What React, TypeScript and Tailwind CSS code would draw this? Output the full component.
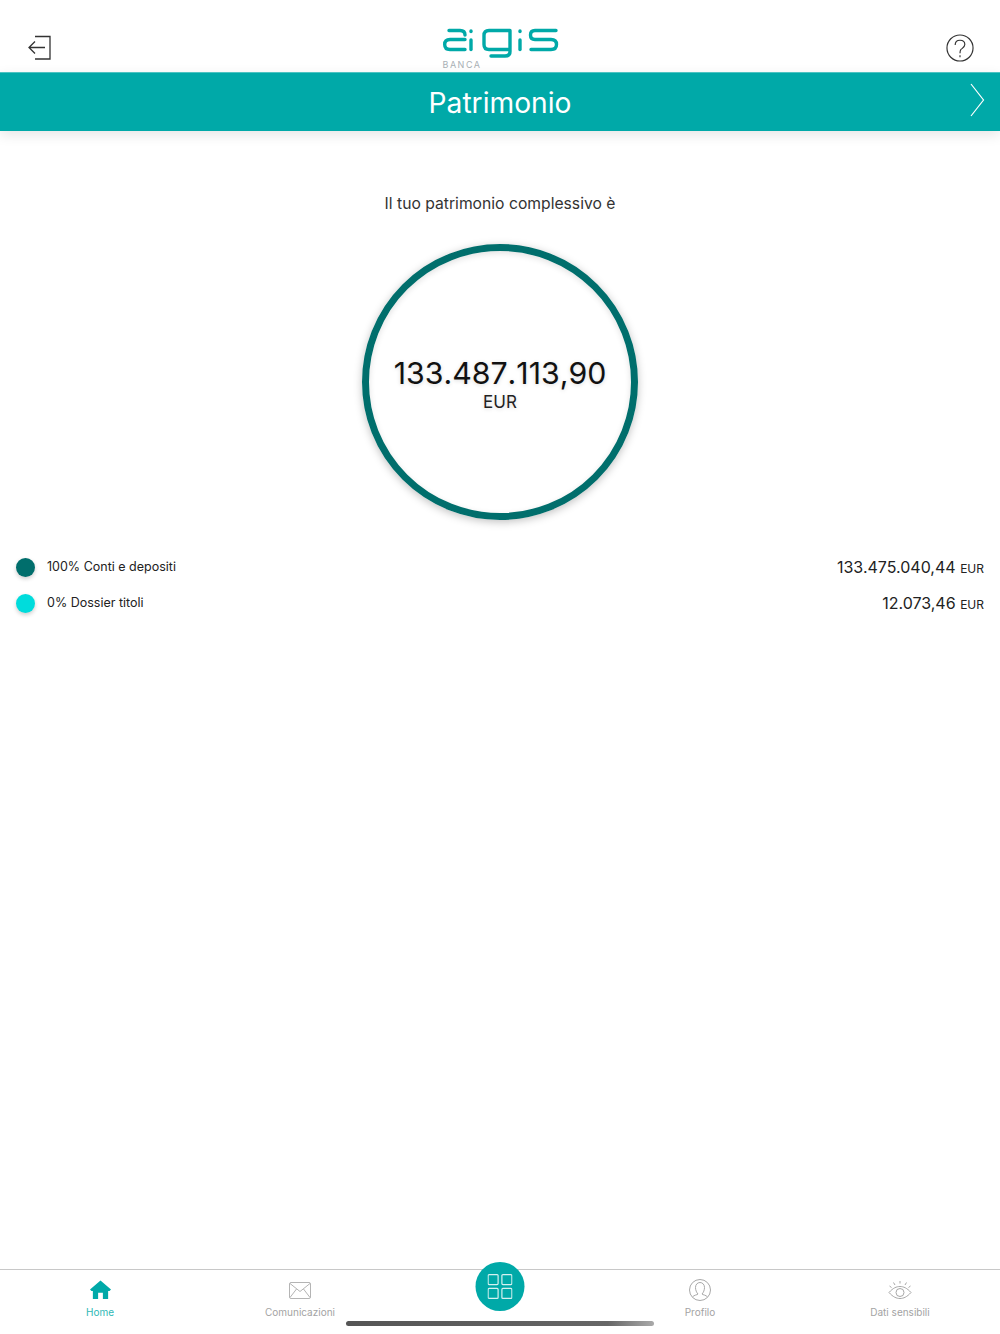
const navItems = [
  { label: "Home", active: true },
  { label: "Comunicazioni", active: false },
  { label: "", active: false },
  { label: "Profilo", active: false },
  { label: "Dati sensibili", active: false },
];

function Logo() {
  return (
    <svg width="116" height="30" viewBox="0 0 116 30" fill="none" stroke="#00a9a8" strokeWidth="3.400" strokeLinecap="round" strokeLinejoin="round">
      <path d="M6 2.500H17C20.500 2.500 22 4 22 7" />
      <path d="M22 11.500H7C3.500 11.500 1.700 13 1.700 16.500C1.700 20 3.500 21.500 7 21.500H22" />
      <path d="M28 12V21.500" />
      <path d="M28 3V3.500" />
      <path d="M67 2.500H46C42.500 2.500 41 4 41 7.500V16.500C41 20 42.500 21.500 46 21.500H67M67 2.500V23.500C67 26.500 65.500 28 62 28H48" />
      <path d="M77 12V21.500" />
      <path d="M77 3V3.500" />
      <path d="M113 2.500H92C89 2.500 87.500 4 87.500 7C87.500 10 89 11.500 92 11.500H108C112 11.500 113.500 13 113.500 16.500C113.500 20 112 21.500 108 21.500H88" />
    </svg>
  );
}

function NavIcon({ index }: { index: number }) {
  if (index === 0) {
    return (
      <svg width="21" height="20" viewBox="0 0 22 20" fill="#00a9a8">
        <path d="M11 0L22 9.500L20.500 11H19V19.500H13.500V13H8.500V19.500H3V11H1.500L0 9.500Z" />
      </svg>
    );
  }
  if (index === 1) {
    return (
      <svg width="22" height="17" viewBox="0 0 22 17" fill="none" stroke="#b4b4b4" strokeWidth="1">
        <rect x="0.500" y="0.500" width="21" height="16" rx="1.500" />
        <path d="M1 1.500L11 9.500L21 1.500M1 15.500L7.500 7M21 15.500L14.500 7" />
      </svg>
    );
  }
  if (index === 3) {
    return (
      <svg width="22" height="22" viewBox="0 0 22 22" fill="none" stroke="#a8a8a8" strokeWidth="1">
        <circle cx="11" cy="11" r="10.500" />
        <path d="M3.500 18C5 16 8 16 9 15C7.500 13.500 6.500 11 6.500 8.500C6.500 5.500 8.500 3.500 11 3.500C13.500 3.500 15.500 5.500 15.500 8.500C15.500 11 14.500 13.500 13 15C14 16 17 16 18.500 18" />
      </svg>
    );
  }
  return (
    <svg width="24" height="20" viewBox="0 0 24 20" fill="none" stroke="#a8a8a8" strokeWidth="1">
      <path d="M1 12.500C5 8 8.500 6.500 12 6.500C15.500 6.500 19 8 23 12.500C19 17 15.500 18.500 12 18.500C8.500 18.500 5 17 1 12.500Z" />
      <circle cx="12" cy="12.500" r="4" />
      <path d="M12 1V3.500M5.500 2.500L7 5M18.500 2.500L17 5M1.500 6L3.500 7.500M22.500 6L20.500 7.500" />
    </svg>
  );
}

export default function App() {
  return (
    <div className="relative flex h-[1334px] w-[1000px] flex-col overflow-hidden bg-white font-['Inter',sans-serif] text-[#1c1c1e]">
      <header className="flex h-[72px] shrink-0 items-start justify-between">
        <svg className="ml-[27px] mt-[35px]" width="24" height="26" viewBox="0 0 24 26" fill="none" stroke="#333" strokeWidth="1.300">
          <path d="M8 1.500H23V24H8" />
          <path d="M18 12.500H2M8 6.500L2 12.500L8 18.500" />
        </svg>
        <div className="ml-[4px] flex flex-col items-start pt-[28px]">
          <Logo />
          <span className="mt-[0.500px] text-[9px] leading-[11px] tracking-[1.500px] text-[#a9b0b5]">BANCA</span>
        </div>
        <svg className="mr-[26px] mt-[34px]" width="28" height="28" viewBox="0 0 29 29" fill="none" stroke="#333" strokeWidth="1.200">
          <circle cx="14.500" cy="14.500" r="13.500" />
          <path d="M9.500 11.500C9.500 8.500 11.500 6.500 14.500 6.500C17.500 6.500 19.500 8.500 19.500 11C19.500 13.500 17 14.500 15.500 16C14.800 16.800 14.500 17.500 14.500 20" />
          <path d="M14.500 22V24" />
        </svg>
      </header>

      <div className="relative flex h-[59px] shrink-0 items-center justify-center border-t border-[#4dc3c2] bg-[#00a9a8] pt-[2px] shadow-[0_4px_12px_rgba(0,0,0,0.1)]">
        <h1 className="text-[28.200px] font-normal leading-none text-white">Patrimonio</h1>
        <svg className="absolute right-[15px] top-[10px]" width="15" height="34" viewBox="0 0 15 34" fill="none" stroke="#fff" strokeWidth="1.200">
          <path d="M1 1L13.500 17L1 33" />
        </svg>
      </div>

      <main className="flex flex-1 flex-col">
        <p className="mt-[63px] text-center text-[15.700px] leading-5 text-[#333]">Il tuo patrimonio complessivo è</p>
        <div className="mx-auto mt-[30px] flex h-[276px] w-[276px] flex-col items-center justify-center rounded-full border-[7px] border-[#006e6c] shadow-[0_2px_8px_rgba(0,0,0,0.25),inset_0_2px_6px_rgba(0,0,0,0.12)]">
          <span className="mt-[1px] text-[30.300px] leading-[38px] text-[#111] [font-kerning:none] [text-shadow:0_1px_4px_rgba(0,0,0,0.15)]">133.487.113,90</span>
          <span className="text-[17px] leading-5 text-[#222] [text-shadow:0_1px_4px_rgba(0,0,0,0.15)]">EUR</span>
        </div>
        <div className="mt-[37px] flex flex-col gap-4 pl-4 pr-4">
          <div className="flex h-5 items-center justify-between">
            <div className="flex items-center gap-[12px]">
              <span className="h-[19px] w-[19px] rounded-full bg-[#006e6c] shadow-[0_2px_4px_rgba(0,0,0,0.2)]" />
              <span className="text-[12.500px] text-[#222]">100% Conti e depositi</span>
            </div>
            <span className="text-[16px] text-[#222]">133.475.040,44 <span className="text-[12px]">EUR</span></span>
          </div>
          <div className="flex h-5 items-center justify-between">
            <div className="flex items-center gap-[12px]">
              <span className="h-[19px] w-[19px] rounded-full bg-[#00dcdc] shadow-[0_2px_4px_rgba(0,0,0,0.2)]" />
              <span className="text-[12.500px] text-[#222]">0% Dossier titoli</span>
            </div>
            <span className="text-[16px] text-[#222]">12.073,46 <span className="text-[12px]">EUR</span></span>
          </div>
        </div>
      </main>

      <nav className="grid h-[65px] shrink-0 grid-cols-5 border-t border-[#c8c8c8]">
        {navItems.map((item, i) =>
          i === 2 ? (
            <div key={i} className="relative">
              <div className="absolute left-1/2 top-[-8px] flex h-[49px] w-[49px] -translate-x-1/2 items-center justify-center rounded-full bg-[#00a9a8]">
                <svg width="25" height="25" viewBox="0 0 25 25" fill="none" stroke="#d5f1f0" strokeWidth="1.200">
                  <rect x="0.600" y="0.600" width="10" height="10" rx="1" />
                  <rect x="14.400" y="0.600" width="10" height="10" rx="1" />
                  <rect x="0.600" y="14.400" width="10" height="10" rx="1" />
                  <rect x="14.400" y="14.400" width="10" height="10" rx="1" />
                </svg>
              </div>
            </div>
          ) : (
            <div key={i} className="flex flex-col items-center pt-[9px]">
              <div className="flex h-[22px] items-center">
                <NavIcon index={i} />
              </div>
              <span className={`mt-[5px] text-[10px] leading-[13px] ${item.active ? "text-[#2fb8b6]" : "text-[#a3a3a3]"}`}>{item.label}</span>
            </div>
          ),
        )}
      </nav>
      <div className="absolute bottom-[8px] left-[346px] h-[5px] w-[308px] rounded-full bg-[linear-gradient(90deg,#555,#666_85%,#aaa)]" />
    </div>
  );
}
